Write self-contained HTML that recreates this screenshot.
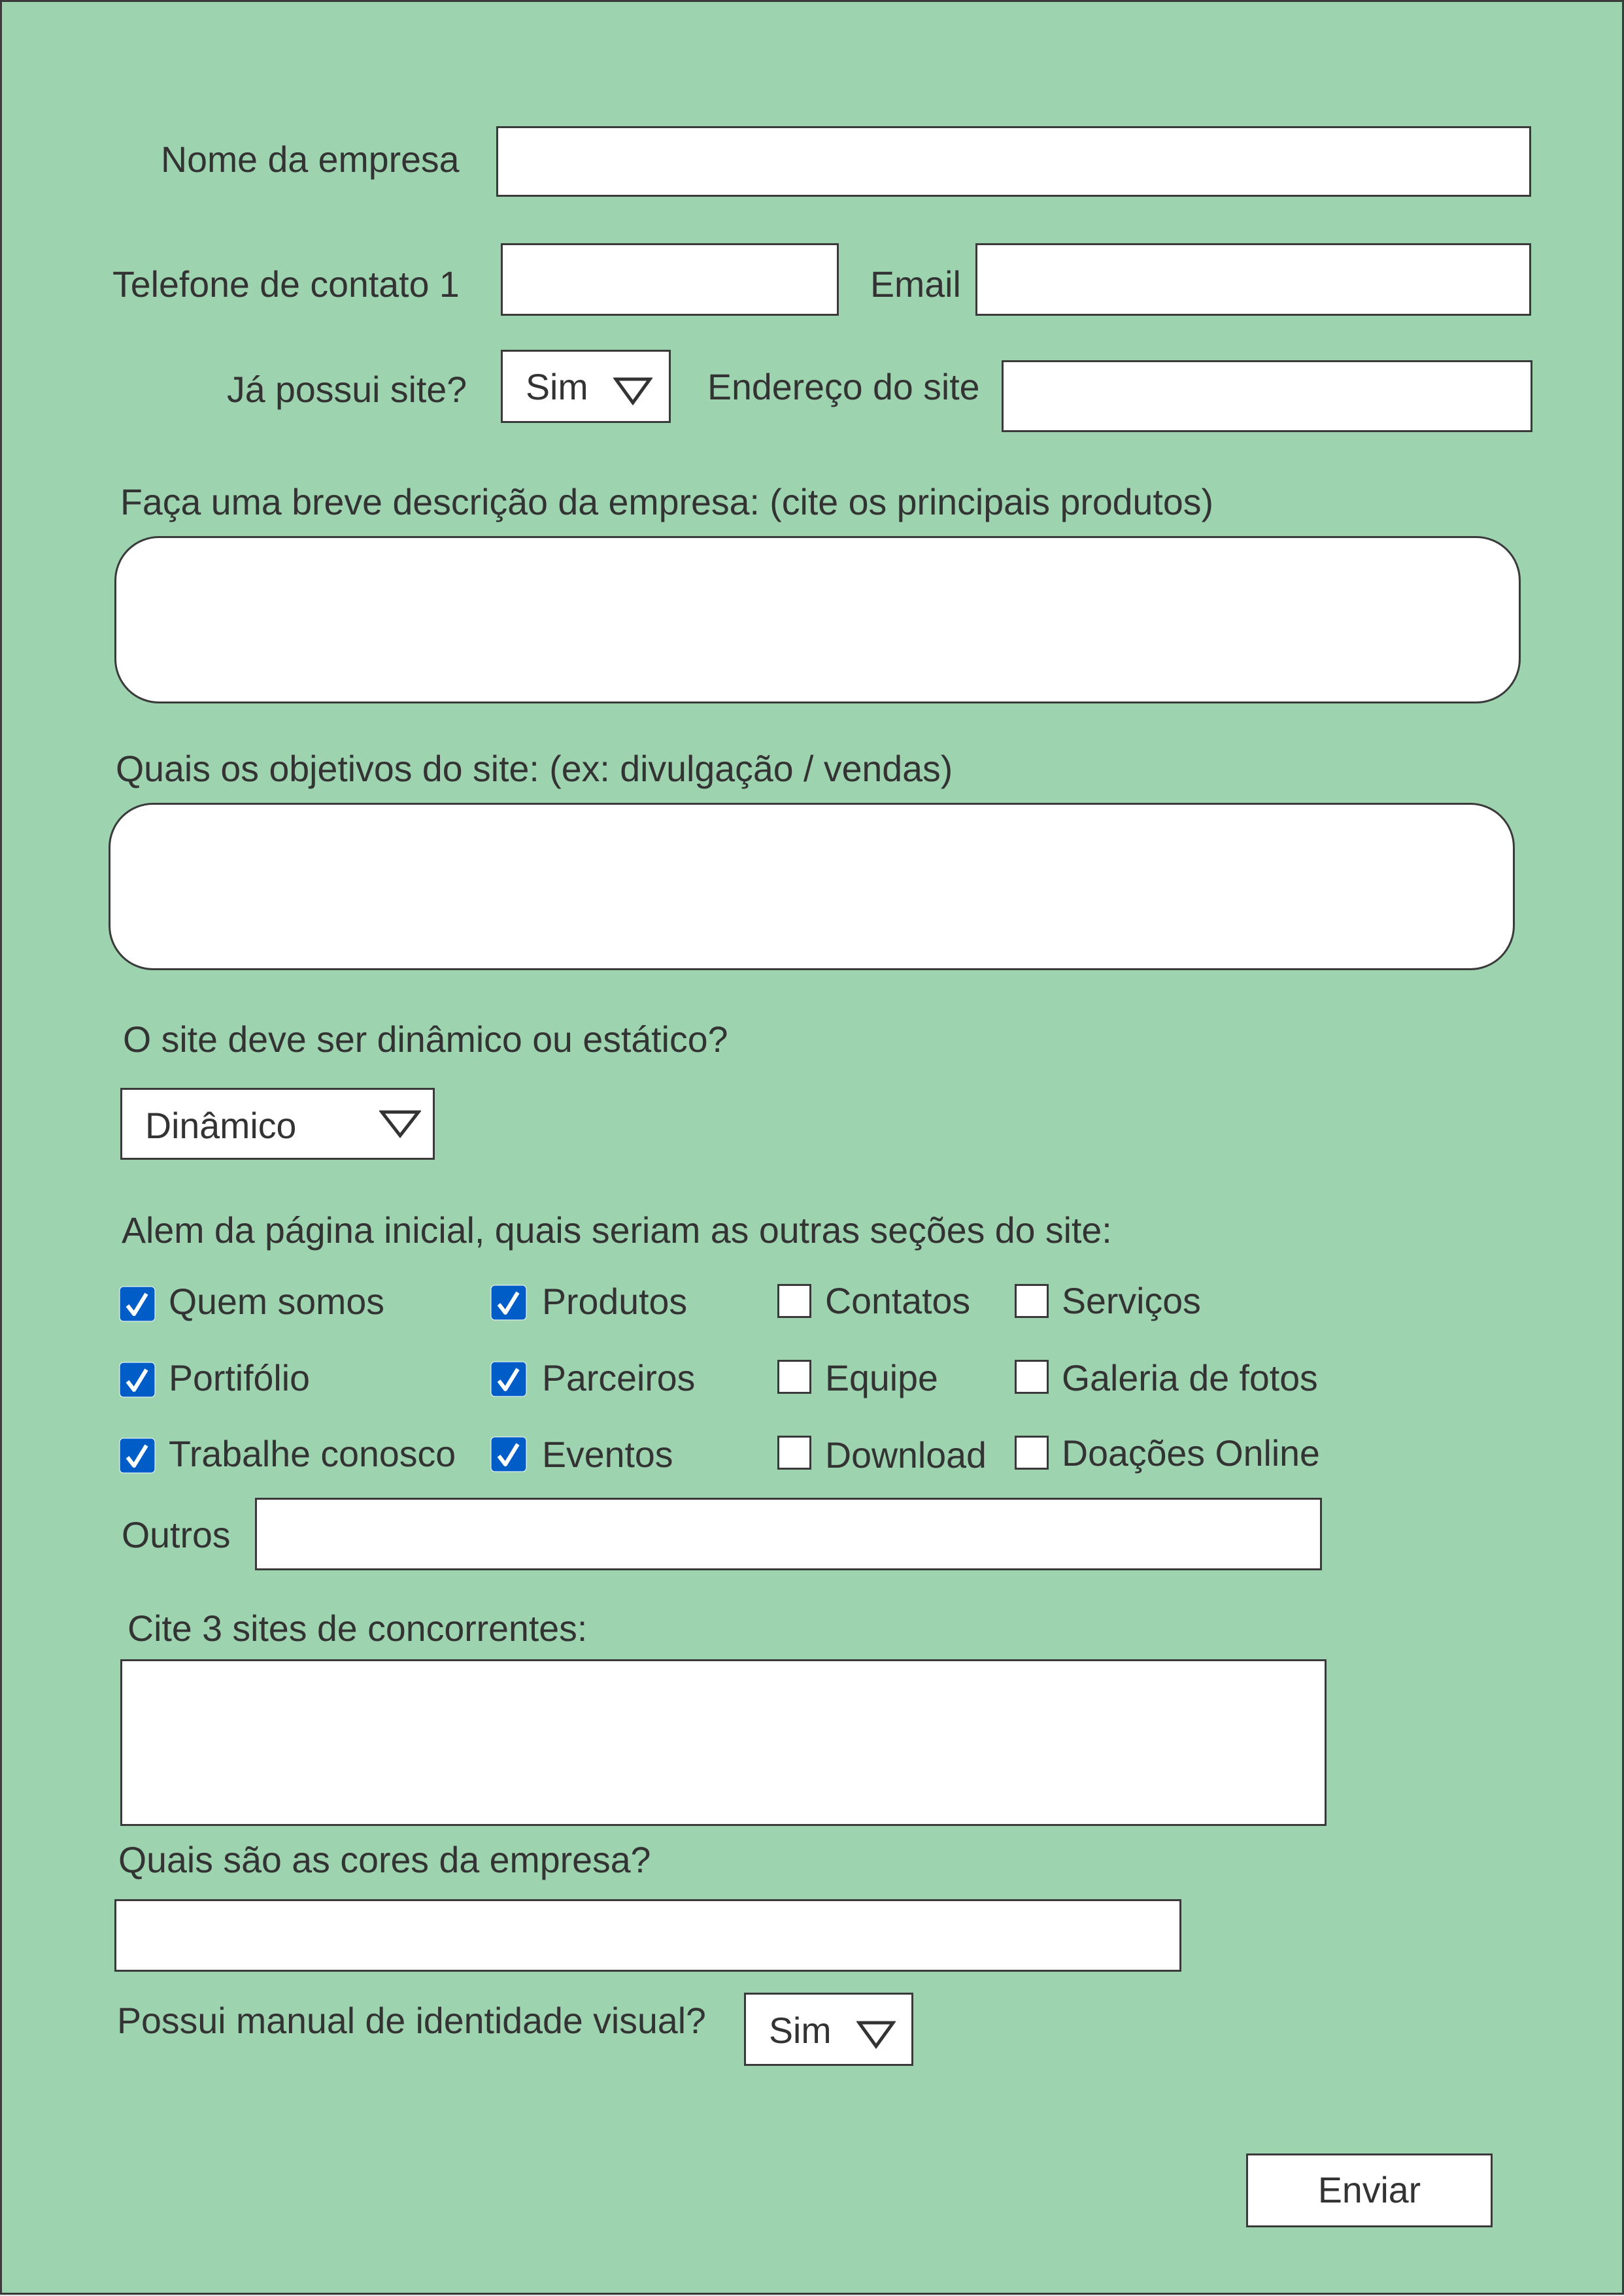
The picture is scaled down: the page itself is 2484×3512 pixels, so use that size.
<!DOCTYPE html>
<html><head><meta charset="utf-8"><style>
html,body{margin:0;padding:0}
body{width:2484px;height:3512px;background:#e6e6e6;position:relative;overflow:hidden;font-family:"Liberation Sans",Arial,sans-serif;color:#333}
.pg{position:absolute;left:0;top:0;width:2478px;height:3504px;border:3px solid #3a3a3a;background:#9dd3af}
.t{position:absolute;font-size:55.5px;line-height:54px;white-space:nowrap}
.b{position:absolute;background:#fff;border:3px solid #3a3a3a;box-sizing:border-box}
.r{border-radius:68px}
.tri{position:absolute}
.cb{position:absolute;width:56px;height:55px}
.ub{position:absolute;width:52px;height:52px;background:#fff;border:3px solid #3a3a3a;box-sizing:border-box}
</style></head><body>
<div class="pg"></div>

<div class="t" style="left:246px;top:217px">Nome da empresa</div>
<div class="b" style="left:759px;top:193px;width:1583px;height:108px"></div>

<div class="t" style="left:172px;top:408px">Telefone de contato 1</div>
<div class="b" style="left:766px;top:372px;width:517px;height:111px"></div>
<div class="t" style="left:1331px;top:408px">Email</div>
<div class="b" style="left:1492px;top:372px;width:850px;height:111px"></div>

<div class="t" style="left:347px;top:569px">Já possui site?</div>
<div class="b" style="left:766px;top:535px;width:260px;height:112px"></div>
<div class="t" style="left:804px;top:565px">Sim</div>
<svg class="tri" style="left:938px;top:576px" width="60" height="44"><polygon points="4,4 56,4 30,40" fill="none" stroke="#333" stroke-width="5"/></svg>
<div class="t" style="left:1082px;top:565px">Endereço do site</div>
<div class="b" style="left:1532px;top:551px;width:812px;height:110px"></div>

<div class="t" style="left:184px;top:741px">Faça uma breve descrição da empresa: (cite os principais produtos)</div>
<div class="b r" style="left:175px;top:820px;width:2151px;height:256px"></div>

<div class="t" style="left:177px;top:1149px">Quais os objetivos do site: (ex: divulgação / vendas)</div>
<div class="b r" style="left:166px;top:1228px;width:2151px;height:256px"></div>

<div class="t" style="left:188px;top:1563px">O site deve ser dinâmico ou estático?</div>
<div class="b" style="left:184px;top:1664px;width:481px;height:110px"></div>
<div class="t" style="left:222px;top:1695px">Dinâmico</div>
<svg class="tri" style="left:580px;top:1697px" width="64" height="44"><polygon points="4,4 60,4 32,40" fill="none" stroke="#333" stroke-width="5"/></svg>

<div class="t" style="left:186px;top:1855px">Alem da página inicial, quais seriam as outras seções do site:</div>

<svg class="cb" style="left:182px;top:1967px" viewBox="0 0 56 55"><rect x="1" y="1" width="54" height="53" rx="6" fill="#005dc8" stroke="#fff" stroke-width="1"/><path d="M13 30 L23 43 L42 12" fill="none" stroke="#fff" stroke-width="6" stroke-linejoin="round"/></svg>
<div class="t" style="left:258px;top:1964px">Quem somos</div>
<svg class="cb" style="left:750px;top:1965px" viewBox="0 0 56 55"><rect x="1" y="1" width="54" height="53" rx="6" fill="#005dc8" stroke="#fff" stroke-width="1"/><path d="M13 30 L23 43 L42 12" fill="none" stroke="#fff" stroke-width="6" stroke-linejoin="round"/></svg>
<div class="t" style="left:829px;top:1964px">Produtos</div>

<svg class="cb" style="left:182px;top:2083px" viewBox="0 0 56 55"><rect x="1" y="1" width="54" height="53" rx="6" fill="#005dc8" stroke="#fff" stroke-width="1"/><path d="M13 30 L23 43 L42 12" fill="none" stroke="#fff" stroke-width="6" stroke-linejoin="round"/></svg>
<div class="t" style="left:258px;top:2081px">Portifólio</div>
<svg class="cb" style="left:750px;top:2082px" viewBox="0 0 56 55"><rect x="1" y="1" width="54" height="53" rx="6" fill="#005dc8" stroke="#fff" stroke-width="1"/><path d="M13 30 L23 43 L42 12" fill="none" stroke="#fff" stroke-width="6" stroke-linejoin="round"/></svg>
<div class="t" style="left:829px;top:2081px">Parceiros</div>

<svg class="cb" style="left:182px;top:2199px" viewBox="0 0 56 55"><rect x="1" y="1" width="54" height="53" rx="6" fill="#005dc8" stroke="#fff" stroke-width="1"/><path d="M13 30 L23 43 L42 12" fill="none" stroke="#fff" stroke-width="6" stroke-linejoin="round"/></svg>
<div class="t" style="left:258px;top:2197px">Trabalhe conosco</div>
<svg class="cb" style="left:750px;top:2197px" viewBox="0 0 56 55"><rect x="1" y="1" width="54" height="53" rx="6" fill="#005dc8" stroke="#fff" stroke-width="1"/><path d="M13 30 L23 43 L42 12" fill="none" stroke="#fff" stroke-width="6" stroke-linejoin="round"/></svg>
<div class="t" style="left:829px;top:2198px">Eventos</div>

<div class="ub" style="left:1189px;top:1964px"></div>
<div class="t" style="left:1262px;top:1963px">Contatos</div>
<div class="ub" style="left:1552px;top:1964px"></div>
<div class="t" style="left:1624px;top:1963px">Serviços</div>
<div class="ub" style="left:1189px;top:2080px"></div>
<div class="t" style="left:1262px;top:2081px">Equipe</div>
<div class="ub" style="left:1552px;top:2080px"></div>
<div class="t" style="left:1624px;top:2081px">Galeria de fotos</div>
<div class="ub" style="left:1189px;top:2196px"></div>
<div class="t" style="left:1262px;top:2199px">Download</div>
<div class="ub" style="left:1552px;top:2196px"></div>
<div class="t" style="left:1624px;top:2196px">Doações Online</div>

<div class="t" style="left:186px;top:2321px">Outros</div>
<div class="b" style="left:390px;top:2291px;width:1632px;height:111px"></div>

<div class="t" style="left:195px;top:2464px">Cite 3 sites de concorrentes:</div>
<div class="b" style="left:184px;top:2538px;width:1845px;height:255px"></div>

<div class="t" style="left:181px;top:2818px">Quais são as cores da empresa?</div>
<div class="b" style="left:175px;top:2905px;width:1632px;height:111px"></div>

<div class="t" style="left:179px;top:3064px">Possui manual de identidade visual?</div>
<div class="b" style="left:1138px;top:3048px;width:259px;height:112px"></div>
<div class="t" style="left:1176px;top:3079px">Sim</div>
<svg class="tri" style="left:1310px;top:3090px" width="60" height="44"><polygon points="4,4 56,4 30,40" fill="none" stroke="#333" stroke-width="5"/></svg>

<div class="b" style="left:1906px;top:3294px;width:377px;height:113px"></div>
<div class="t" style="left:1906px;top:3323px;width:377px;text-align:center">Enviar</div>
</body></html>
